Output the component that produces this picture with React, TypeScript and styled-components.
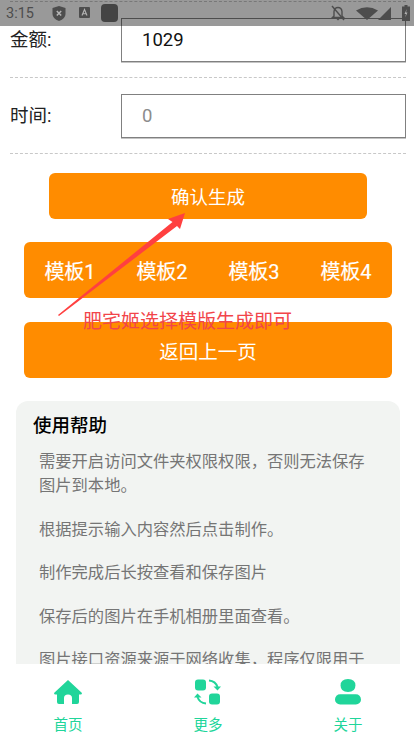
import React from 'react'
import styled, { createGlobalStyle } from 'styled-components'

const GlobalStyle = createGlobalStyle`
  html, body {
    margin: 0;
    padding: 0;
    background: #fff;
    overflow: hidden;
  }
  * {
    box-sizing: border-box;
  }
`

const fields = [
  { label: '金额:', value: '1029', placeholder: '' },
  { label: '时间:', value: '', placeholder: '0' },
]

const templates = ['模板1', '模板2', '模板3', '模板4']

const helpTexts = [
  '需要开启访问文件夹权限权限，否则无法保存图片到本地。',
  '根据提示输入内容然后点击制作。',
  '制作完成后长按查看和保存图片',
  '保存后的图片在手机相册里面查看。',
  '图片接口资源来源于网络收集，程序仅限用于',
]

const App = () => {
  return (
    <Page>
      <GlobalStyle />
      <Content>
        <Form>
          {fields.map((field) => (
            <FieldRow key={field.label}>
              <FieldLabel>{field.label}</FieldLabel>
              <FieldInput readOnly value={field.value} placeholder={field.placeholder} />
            </FieldRow>
          ))}
        </Form>
        <ConfirmButton>确认生成</ConfirmButton>
        <TemplateBar>
          {templates.map((name) => (
            <TemplateItem key={name}>{name}</TemplateItem>
          ))}
        </TemplateBar>
        <BackButton>返回上一页</BackButton>
        <HelpCard>
          <HelpTitle>使用帮助</HelpTitle>
          {helpTexts.map((text) => (
            <HelpText key={text}>{text}</HelpText>
          ))}
        </HelpCard>
      </Content>

      <TabBar>
        <Tab>
          <TabIcon viewBox="0 0 28 26">
            <path d="M14 1 L28 14 Q28 15.500 26.500 15.500 L25 15.500 L25 23 Q25 25 23 25 L18 25 L18 19 Q18 15.500 14 15.500 Q10 15.500 10 19 L10 25 L5 25 Q3 25 3 23 L3 15.500 L1.500 15.500 Q0 15.500 0 14 Z" />
          </TabIcon>
          <TabLabel>首页</TabLabel>
        </Tab>
        <Tab>
          <TabIcon viewBox="0 0 28 26">
            <rect x="1" y="0.500" width="11" height="11" rx="3" />
            <rect x="15" y="14.500" width="11" height="11" rx="3" />
            <path d="M15 1.500 Q21.500 2 23.500 8" fill="none" stroke="#20d59a" strokeWidth="2" />
            <path d="M19.500 7.500 L27 7.500 L23.500 11.500 Z" />
            <path d="M12 24.500 Q5.500 24 3.500 18" fill="none" stroke="#20d59a" strokeWidth="2" />
            <path d="M0 18.500 L7.500 18.500 L3.500 14.500 Z" />
          </TabIcon>
          <TabLabel>更多</TabLabel>
        </Tab>
        <Tab>
          <TabIcon viewBox="0 0 28 28">
            <path d="M6 7 Q6 0 14 0 Q22 0 22 7 Q22 14 14 14 Q6 14 6 7 Z" />
            <rect x="0" y="16.500" width="28" height="11" rx="5.500" />
          </TabIcon>
          <TabLabel>关于</TabLabel>
        </Tab>
      </TabBar>

      <StatusBar>
        <StatusTime>3:15</StatusTime>
        <StatusIcon width="14" height="15" viewBox="0 0 14 15">
          <path d="M7 0 L13.500 2 L13.500 8 Q13.500 12.500 7 15 Q0.500 12.500 0.500 8 L0.500 2 Z" />
          <path d="M4.800 5 L9.200 9.500 M9.200 5 L4.800 9.500" stroke="#b5b5b5" strokeWidth="1.500" />
        </StatusIcon>
        <LetterIcon width="12" height="12" viewBox="0 0 12 12">
          <rect width="11" height="11" rx="1" />
          <path d="M3 8.500 L5.500 2.500 L8 8.500 M4 6.800 L7 6.800" stroke="#b5b5b5" strokeWidth="1.100" fill="none" />
        </LetterIcon>
        <AppIcon />
        <StatusRight>
          <StatusIcon width="14" height="16" viewBox="0 0 14 16">
            <path d="M3 11 L3 6.500 Q3.500 2.500 7 2.500 Q10.500 2.500 11 6.500 L11 11 L12.500 12.500 L1.500 12.500 Z" fill="none" stroke="#4d4d4d" strokeWidth="1.400" />
            <path d="M5.500 14 L8.500 14 L7 15.500 Z" />
            <path d="M1 1 L13 15" stroke="#4d4d4d" strokeWidth="1.400" />
          </StatusIcon>
          <WifiIcon width="22" height="13" viewBox="0 0 22 13">
            <path d="M0 3.500 Q11 -3 22 3.500 L11 13 Z" />
          </WifiIcon>
          <SignalIcon width="13" height="13" viewBox="0 0 13 13">
            <path d="M13 0 L13 13 L0 13 Z" />
          </SignalIcon>
          <BatteryIcon width="8" height="16" viewBox="0 0 8 16">
            <path d="M2.500 0 L5.500 0 L5.500 1.500 L8 1.500 L8 16 L0 16 L0 1.500 L2.500 1.500 Z" />
            <path d="M4.800 4 L2.500 9 L4 9 L3.200 12.500 L5.500 7.500 L4 7.500 Z" fill="#b0b0b0" />
          </BatteryIcon>
        </StatusRight>
      </StatusBar>

      <ArrowMark viewBox="0 0 414 741">
        <path d="M58 315 L172.500 222 L168 219 L185 213 L180 229 L177 226 L59 316 Z" />
      </ArrowMark>
      <ArrowCaption>肥宅姬选择模版生成即可</ArrowCaption>
    </Page>
  )
}

export default App

const fontStack = `Roboto, "Noto Sans CJK SC", sans-serif`

const Page = styled.div`
  position: relative;
  width: 414px;
  height: 741px;
  display: flex;
  flex-direction: column;
  overflow: hidden;
  background: #fff;
  font-family: ${fontStack};
`
const Content = styled.div`
  flex: 1;
  min-height: 0;
  overflow: hidden;
  padding-top: 1px;
`
const Form = styled.div`
  margin: 0 8px 0 10px;
  border-top: 1px dashed #c8c8c8;
`
const FieldRow = styled.div`
  display: flex;
  align-items: center;
  justify-content: space-between;
  padding: 15px 0;
  height: 76px;
  border-bottom: 1px dashed #c8c8c8;
`
const FieldLabel = styled.label`
  margin-top: -3px;
  font-size: 18.500px;
  color: #222;
`
const FieldInput = styled.input`
  width: 285px;
  height: 44px;
  padding: 0 20px;
  border: 1px solid #808080;
  border-radius: 0;
  outline: none;
  background: #fff;
  box-shadow: 0 1px 0 #c4c4c4;
  font-family: ${fontStack};
  font-size: 18.500px;
  color: #111;
  &::placeholder {
    color: #8c8c8c;
    opacity: 1;
  }
`
const ConfirmButton = styled.div`
  width: 318px;
  height: 46px;
  margin: 19px 0 0 49px;
  display: flex;
  align-items: center;
  justify-content: center;
  border-radius: 6px;
  background: #ff8c00;
  color: #fff;
  font-size: 18.500px;
`
const TemplateBar = styled.div`
  height: 56px;
  margin: 23px 22px 0 24px;
  display: grid;
  grid-template-columns: repeat(4, 1fr);
  align-items: center;
  justify-items: center;
  border-radius: 6px;
  background: #ff8c00;
`
const TemplateItem = styled.div`
  color: #fff;
  font-size: 20px;
  -webkit-text-stroke: 0.2px #fff;
`
const BackButton = styled.div`
  height: 56px;
  margin: 24px 22px 0 24px;
  display: flex;
  align-items: center;
  justify-content: center;
  border-radius: 6px;
  background: #ff8c00;
  color: #fff;
  font-size: 19.500px;
`
const HelpCard = styled.div`
  margin: 23px 14px 0 16px;
  padding: 12px 17px 20px;
  border-radius: 12px 12px 0 0;
  background: #f2f4f2;
`
const HelpTitle = styled.div`
  font-size: 18.500px;
  line-height: 26px;
  font-weight: 500;
  color: #000;
  margin-bottom: 11px;
`
const HelpText = styled.p`
  margin: 0 0 19.500px;
  padding: 0 10px 0 6px;
  font-size: 16.300px;
  line-height: 24px;
  color: #757575;
`
const TabBar = styled.div`
  flex: none;
  height: 77px;
  padding: 15px 0 0 2px;
  display: grid;
  grid-template-columns: repeat(3, 140px);
  justify-content: center;
  background: #fff;
`
const Tab = styled.div`
  display: flex;
  flex-direction: column;
  align-items: center;
`
const TabIcon = styled.svg`
  width: 28px;
  height: 26px;
  fill: #20d59a;
`
const TabLabel = styled.div`
  margin-top: 10px;
  font-size: 14.500px;
  line-height: 22px;
  color: #20d59a;
`
const StatusBar = styled.div`
  position: absolute;
  top: 0;
  left: 0;
  right: 0;
  height: 26px;
  padding: 0 4px 0 6px;
  display: flex;
  align-items: center;
  background: rgba(0, 0, 0, 0.4);
`
const StatusTime = styled.span`
  width: 46px;
  font-size: 14.500px;
  color: #4d4d4d;
`
const StatusIcon = styled.svg`
  flex: none;
  fill: #4d4d4d;
`
const LetterIcon = styled(StatusIcon)`
  margin-left: 13px;
`
const AppIcon = styled.div`
  width: 17px;
  height: 18px;
  margin-left: 10px;
  border-radius: 4px;
  background: #444;
`
const StatusRight = styled.div`
  margin-left: auto;
  display: flex;
  align-items: center;
`
const WifiIcon = styled(StatusIcon)`
  margin-left: 11px;
`
const SignalIcon = styled(StatusIcon)`
  margin-left: 0;
`
const BatteryIcon = styled(StatusIcon)`
  margin-left: 11px;
`
const ArrowMark = styled.svg`
  position: absolute;
  top: 0;
  left: 0;
  width: 414px;
  height: 741px;
  fill: #ff4040;
  pointer-events: none;
`
const ArrowCaption = styled.div`
  position: absolute;
  top: 308px;
  left: 83px;
  font-size: 19px;
  line-height: 27px;
  color: #f2454a;
  white-space: nowrap;
`
